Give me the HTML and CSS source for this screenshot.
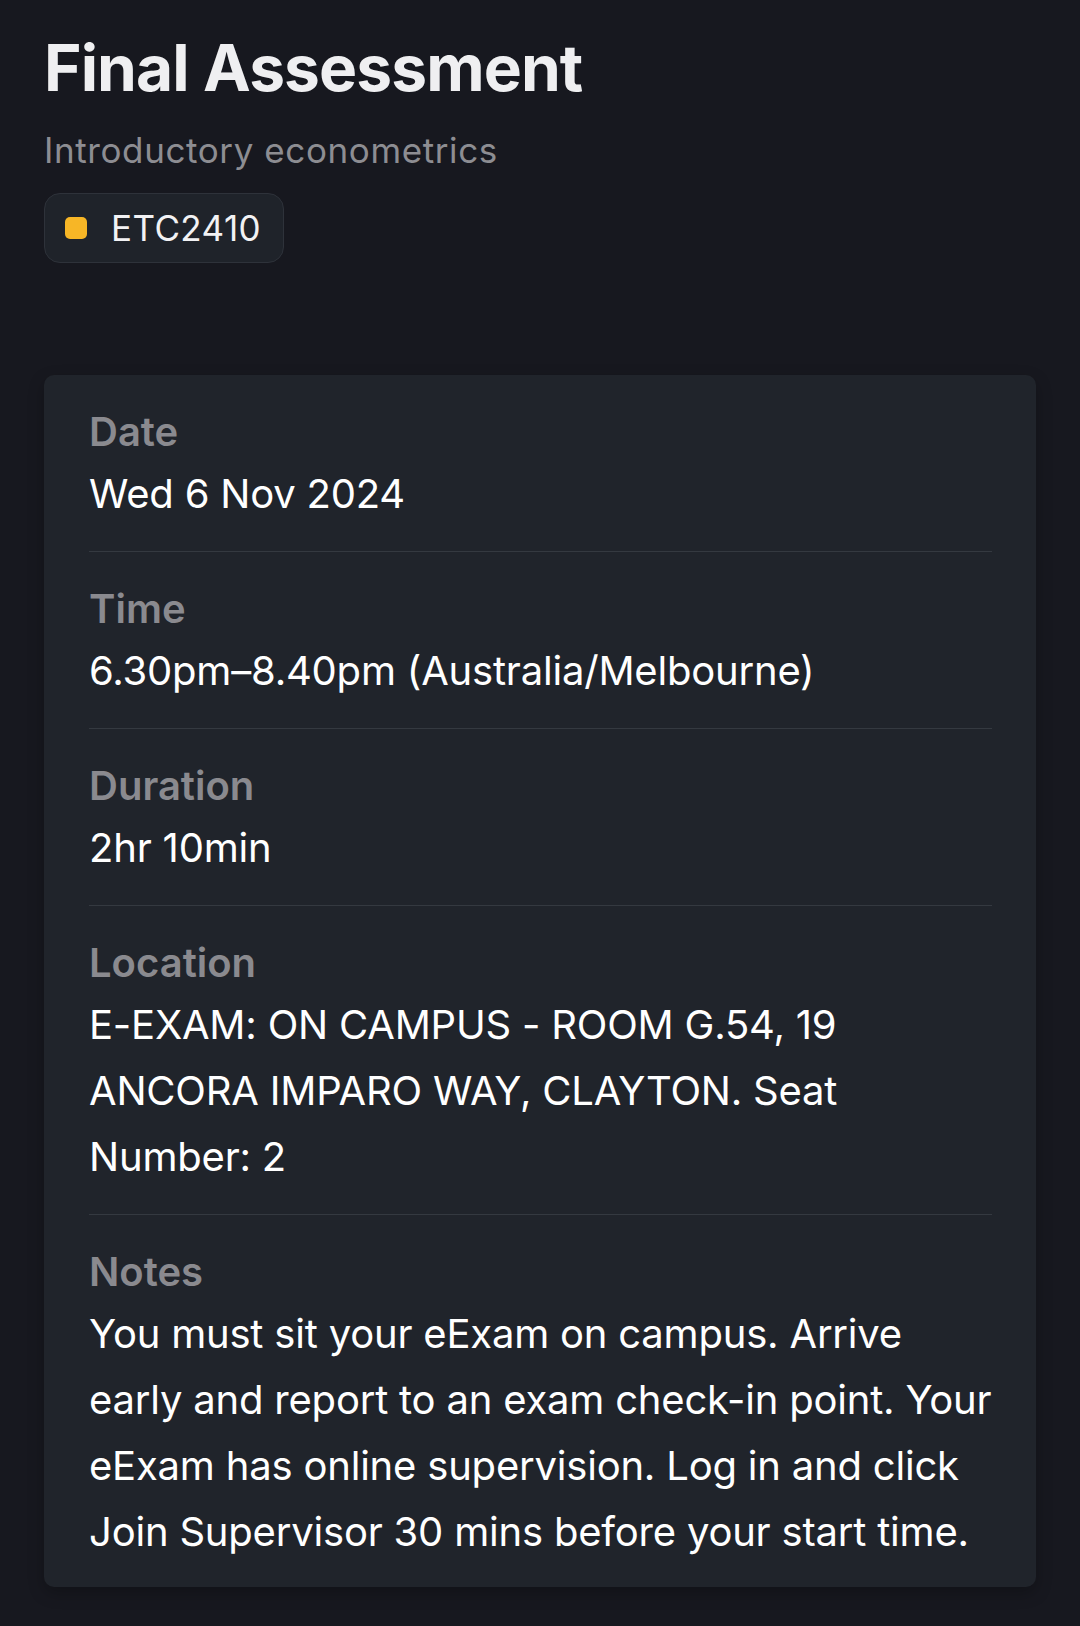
FILE: index.html
```html
<!DOCTYPE html>
<html lang="en">
<head>
<meta charset="utf-8">
<title>Final Assessment</title>
<link rel="stylesheet" href="styles.css">
</head>
<body>
<main class="page">
  <header class="header">
    <h1 class="title">Final Assessment</h1>
    <p class="subtitle">Introductory econometrics</p>
    <div class="badge"><span class="badge-dot"></span><span class="badge-text">ETC2410</span></div>
  </header>
  <section class="card">
    <div class="row">
      <div class="label">Date</div>
      <div class="value">Wed 6 Nov 2024</div>
    </div>
    <div class="row">
      <div class="label">Time</div>
      <div class="value">6.30pm–8.40pm (Australia/Melbourne)</div>
    </div>
    <div class="row">
      <div class="label">Duration</div>
      <div class="value">2hr 10min</div>
    </div>
    <div class="row">
      <div class="label">Location</div>
      <div class="value">E-EXAM: ON CAMPUS - ROOM G.54, 19 ANCORA IMPARO WAY, CLAYTON. Seat Number: 2</div>
    </div>
    <div class="row row-last">
      <div class="label">Notes</div>
      <div class="value">You must sit your eExam on campus. Arrive early and report to an exam check-in point. Your eExam has online supervision. Log in and click Join Supervisor 30 mins before your start time.</div>
    </div>
  </section>
</main>
</body>
</html>
```
FILE: styles.css
```css
html, body {
  margin: 0;
  padding: 0;
  background: #17181f;
}
body {
  font-family: Inter, "Noto Sans", "Liberation Sans", sans-serif;
  color: #ffffff;
  min-height: 1626px;
}
.page {
  padding: 30px 44px 40px 44px;
}
.header {
  display: flex;
  flex-direction: column;
  align-items: flex-start;
}
.title {
  margin: 0;
  font-size: 64px;
  line-height: 76px;
  font-weight: 700;
  color: #efeff1;
  letter-spacing: -0.9px;
}
.subtitle {
  margin: 22px 0 0;
  font-size: 35px;
  line-height: 44px;
  font-weight: 400;
  color: #8d8d92;
  letter-spacing: 0.6px;
}
.badge {
  margin-top: 21px;
  height: 70px;
  box-sizing: border-box;
  display: flex;
  align-items: center;
  gap: 24px;
  padding: 0 22px 0 20px;
  background: #1f232a;
  border: 1px solid #2e323a;
  border-radius: 16px;
}
.badge-dot {
  width: 22px;
  height: 22px;
  border-radius: 5px;
  background: #f7b626;
}
.badge-text {
  font-size: 35px;
  line-height: 44px;
  color: #f2f2f4;
  letter-spacing: 0.4px;
}
.card {
  margin-top: 112px;
  background: #20242b;
  border-radius: 10px;
  padding: 0 44px 0 45px;
  box-shadow: 0 6px 16px rgba(0, 0, 0, 0.25);
}
.row {
  display: flex;
  flex-direction: column;
  gap: 5px;
  padding: 33px 0 24px;
  border-bottom: 1px solid #343940;
}
.row-last {
  border-bottom: none;
  padding-bottom: 22px;
}
.label {
  font-size: 40px;
  line-height: 48px;
  font-weight: 600;
  color: #8a8a8f;
}
.value {
  font-size: 40px;
  line-height: 66px;
  font-weight: 400;
  color: #ffffff;
  letter-spacing: -0.2px;
}
```
